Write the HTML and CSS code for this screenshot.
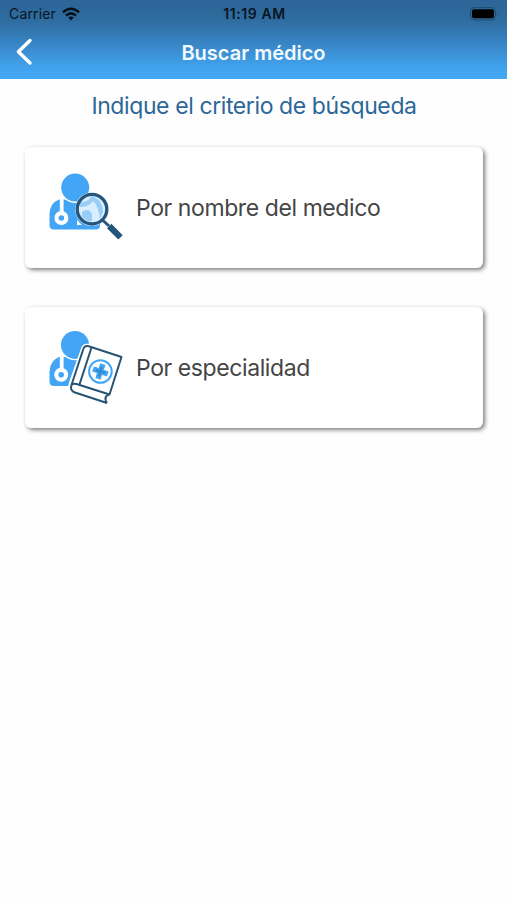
FILE: index.html
```html
<!DOCTYPE html>
<html lang="es">
<head>
<meta charset="utf-8">
<title>Buscar médico</title>
<link rel="stylesheet" href="styles.css">
</head>
<body>
<header class="header">
  <div class="status">
    <div class="carrier"><span class="carrier-name">Carrier</span>
      <svg class="wifi" viewBox="0 0 18 14" fill="none" stroke="#071018" stroke-width="2.5"><path d="M1 5.2Q9-1.8 17 5.2M4 8.6Q9 4.2 14 8.6"/><path d="M6.2 10.6Q9 8.4 11.8 10.6L9 13.5Z" fill="#071018" stroke="none"/></svg>
    </div>
    <span class="time">11:19 AM</span>
    <svg class="battery" viewBox="0 0 30 14"><rect x=".6" y=".6" width="24.8" height="12.3" rx="3.5" fill="none" stroke="#1d4c70"/><rect x="2" y="2.2" width="22" height="9" rx="2" fill="#000"/><path d="M27 4.5q3 2.2 0 4.4z" fill="#245a85"/></svg>
  </div>
  <div class="nav">
    <svg class="back" viewBox="0 0 18 28" fill="none" stroke="#fff" stroke-width="3.4" stroke-linecap="round" stroke-linejoin="round"><path d="M15 2.5 3.4 13.8 15 25"/></svg>
    <h1 class="title">Buscar médico</h1>
  </div>
</header>
<main class="main">
  <h2 class="prompt">Indique el criterio de búsqueda</h2>
  <section class="card">
    <svg class="icon" viewBox="8 5 78 76">
      <path d="M9.5 60V49Q10 38 19 34.5H49Q60 40 60 52V60Q60 64.5 56 64.5H14Q9.5 64.5 9.5 60Z" fill="#43a5f5"/>
      <circle cx="35.2" cy="22.6" r="15.3" fill="#fff"/>
      <circle cx="35.2" cy="22.6" r="14" fill="#43a5f5"/>
      <path d="M21.7 32V48" stroke="#fff" stroke-width="3.8"/>
      <circle cx="21.4" cy="53" r="4.9" fill="#43a5f5" stroke="#fff" stroke-width="4.2"/>
      <path d="M37 55v5h5" fill="#fff"/>
      <circle cx="52" cy="44.2" r="16.8" fill="#fff"/>
      <circle cx="52" cy="44.2" r="14.8" fill="#d9eefe"/>
      <path d="M40 37Q47 38 52 31Q63 35 63 47L60 54Q58 40 53 36Q49 42 40 42ZM42 47Q48 42 52 49V56Q46 57 42 52Z" fill="#98cdf8"/>
      <circle cx="52" cy="44.2" r="14.8" fill="none" stroke="#24557d" stroke-width="3.3"/>
      <path d="M62.5 55 69 61" stroke="#24557d" stroke-width="3"/>
      <path d="M69.2 61 80.5 72.4" stroke="#24557d" stroke-width="6.2"/>
    </svg>
    <span class="label">Por nombre del medico</span>
  </section>
  <section class="card">
    <svg class="icon" viewBox="8 7.5 78 76">
      <path d="M9.5 59V49Q10 38 19 34.5H45V63.5H14Q9.5 63.5 9.5 59Z" fill="#43a5f5"/>
      <circle cx="35" cy="22.4" r="15.3" fill="#fff"/>
      <circle cx="35" cy="22.4" r="14" fill="#43a5f5"/>
      <path d="M21.7 32V48" stroke="#fff" stroke-width="3.8"/>
      <circle cx="21.2" cy="52.3" r="4.9" fill="#43a5f5" stroke="#fff" stroke-width="4.2"/>
      <path d="M48 23.5 81.5 34.5 69.5 71.5 67 80.5 34 69.5Q29 66 31 61L43 27Q44 23 48 23.5Z" fill="#fff" stroke="#fff" stroke-width="4.5"/>
      <g fill="none" stroke="#285474" stroke-width="2" stroke-linejoin="round">
        <path d="M48 23.5 81.5 34.5 69.5 72 36.5 61.5Q31 60 31 65Q31 68.5 35 70L67 80.5M31 64 43 27.5Q44 23 48 23.5M51.5 25 39.5 62M69.5 71.5 66 74Q64.5 77 67 80.5"/>
      </g>
      <circle cx="60.4" cy="49" r="11.3" fill="#fff" stroke="#43a5f5" stroke-width="2"/>
      <path d="M62 44.3 58.8 53.7M55.6 47.4 65.2 50.6" stroke="#43a5f5" stroke-width="5.4" stroke-linecap="square"/>
      <path d="M61.6 45 59.2 53M56.4 47.8 64.4 50.2" stroke="#288bcf" stroke-width="1.8" stroke-linecap="round"/>
    </svg>
    <span class="label">Por especialidad</span>
  </section>
</main>
</body>
</html>
```
FILE: styles.css
```css
* { box-sizing: border-box; }
body {
  margin: 0;
  min-height: 900px;
  background: #fefefe;
  font-family: Inter, "Liberation Sans", sans-serif;
}
.header {
  height: 79px;
  background: linear-gradient(#2d6799 0, #2d6799 6px, #2e6c9f 20px, #3987c8 45px, #41a2ec 67px, #43a9f6 79px);
}
.status {
  height: 27px;
  display: grid;
  grid-template-columns: 1fr auto 1fr;
  align-items: center;
  padding: 0 7px 0 9px;
  color: #091522;
}
.carrier { display: flex; align-items: center; gap: 6px; }
.carrier-name { font-size: 14px; line-height: 27px; letter-spacing: .15px; }
.wifi { width: 18px; height: 14px; }
.time { font-size: 14px; font-weight: 600; letter-spacing: .6px; }
.battery { width: 30px; height: 14px; justify-self: end; }
.nav {
  height: 52px;
  display: grid;
  grid-template-columns: 34px 1fr 34px;
  align-items: center;
}
.back { width: 18px; height: 28px; margin: 0 0 2px 15px; }
.title {
  margin: 0;
  text-align: center;
  font-size: 20px;
  line-height: 28px;
  font-weight: 600;
  color: #f3faff;
}
.main { padding: 12px 24px 0 25px; }
.prompt {
  margin: 0 0 26px;
  text-align: center;
  font-size: 23px;
  line-height: 30px;
  font-weight: 400;
  letter-spacing: -.4px;
  color: #2d6797;
}
.card {
  height: 121px;
  margin-bottom: 39px;
  display: flex;
  align-items: center;
  padding-left: 23px;
  border-radius: 6px;
  background: #fff;
  box-shadow: 2px 2px 4px rgba(0, 0, 0, .5);
}
.icon { width: 78px; height: 76px; flex: none; }
.label {
  margin-left: 10px;
  font-size: 23px;
  line-height: 30px;
  letter-spacing: -.41px;
  color: #454545;
}
```
